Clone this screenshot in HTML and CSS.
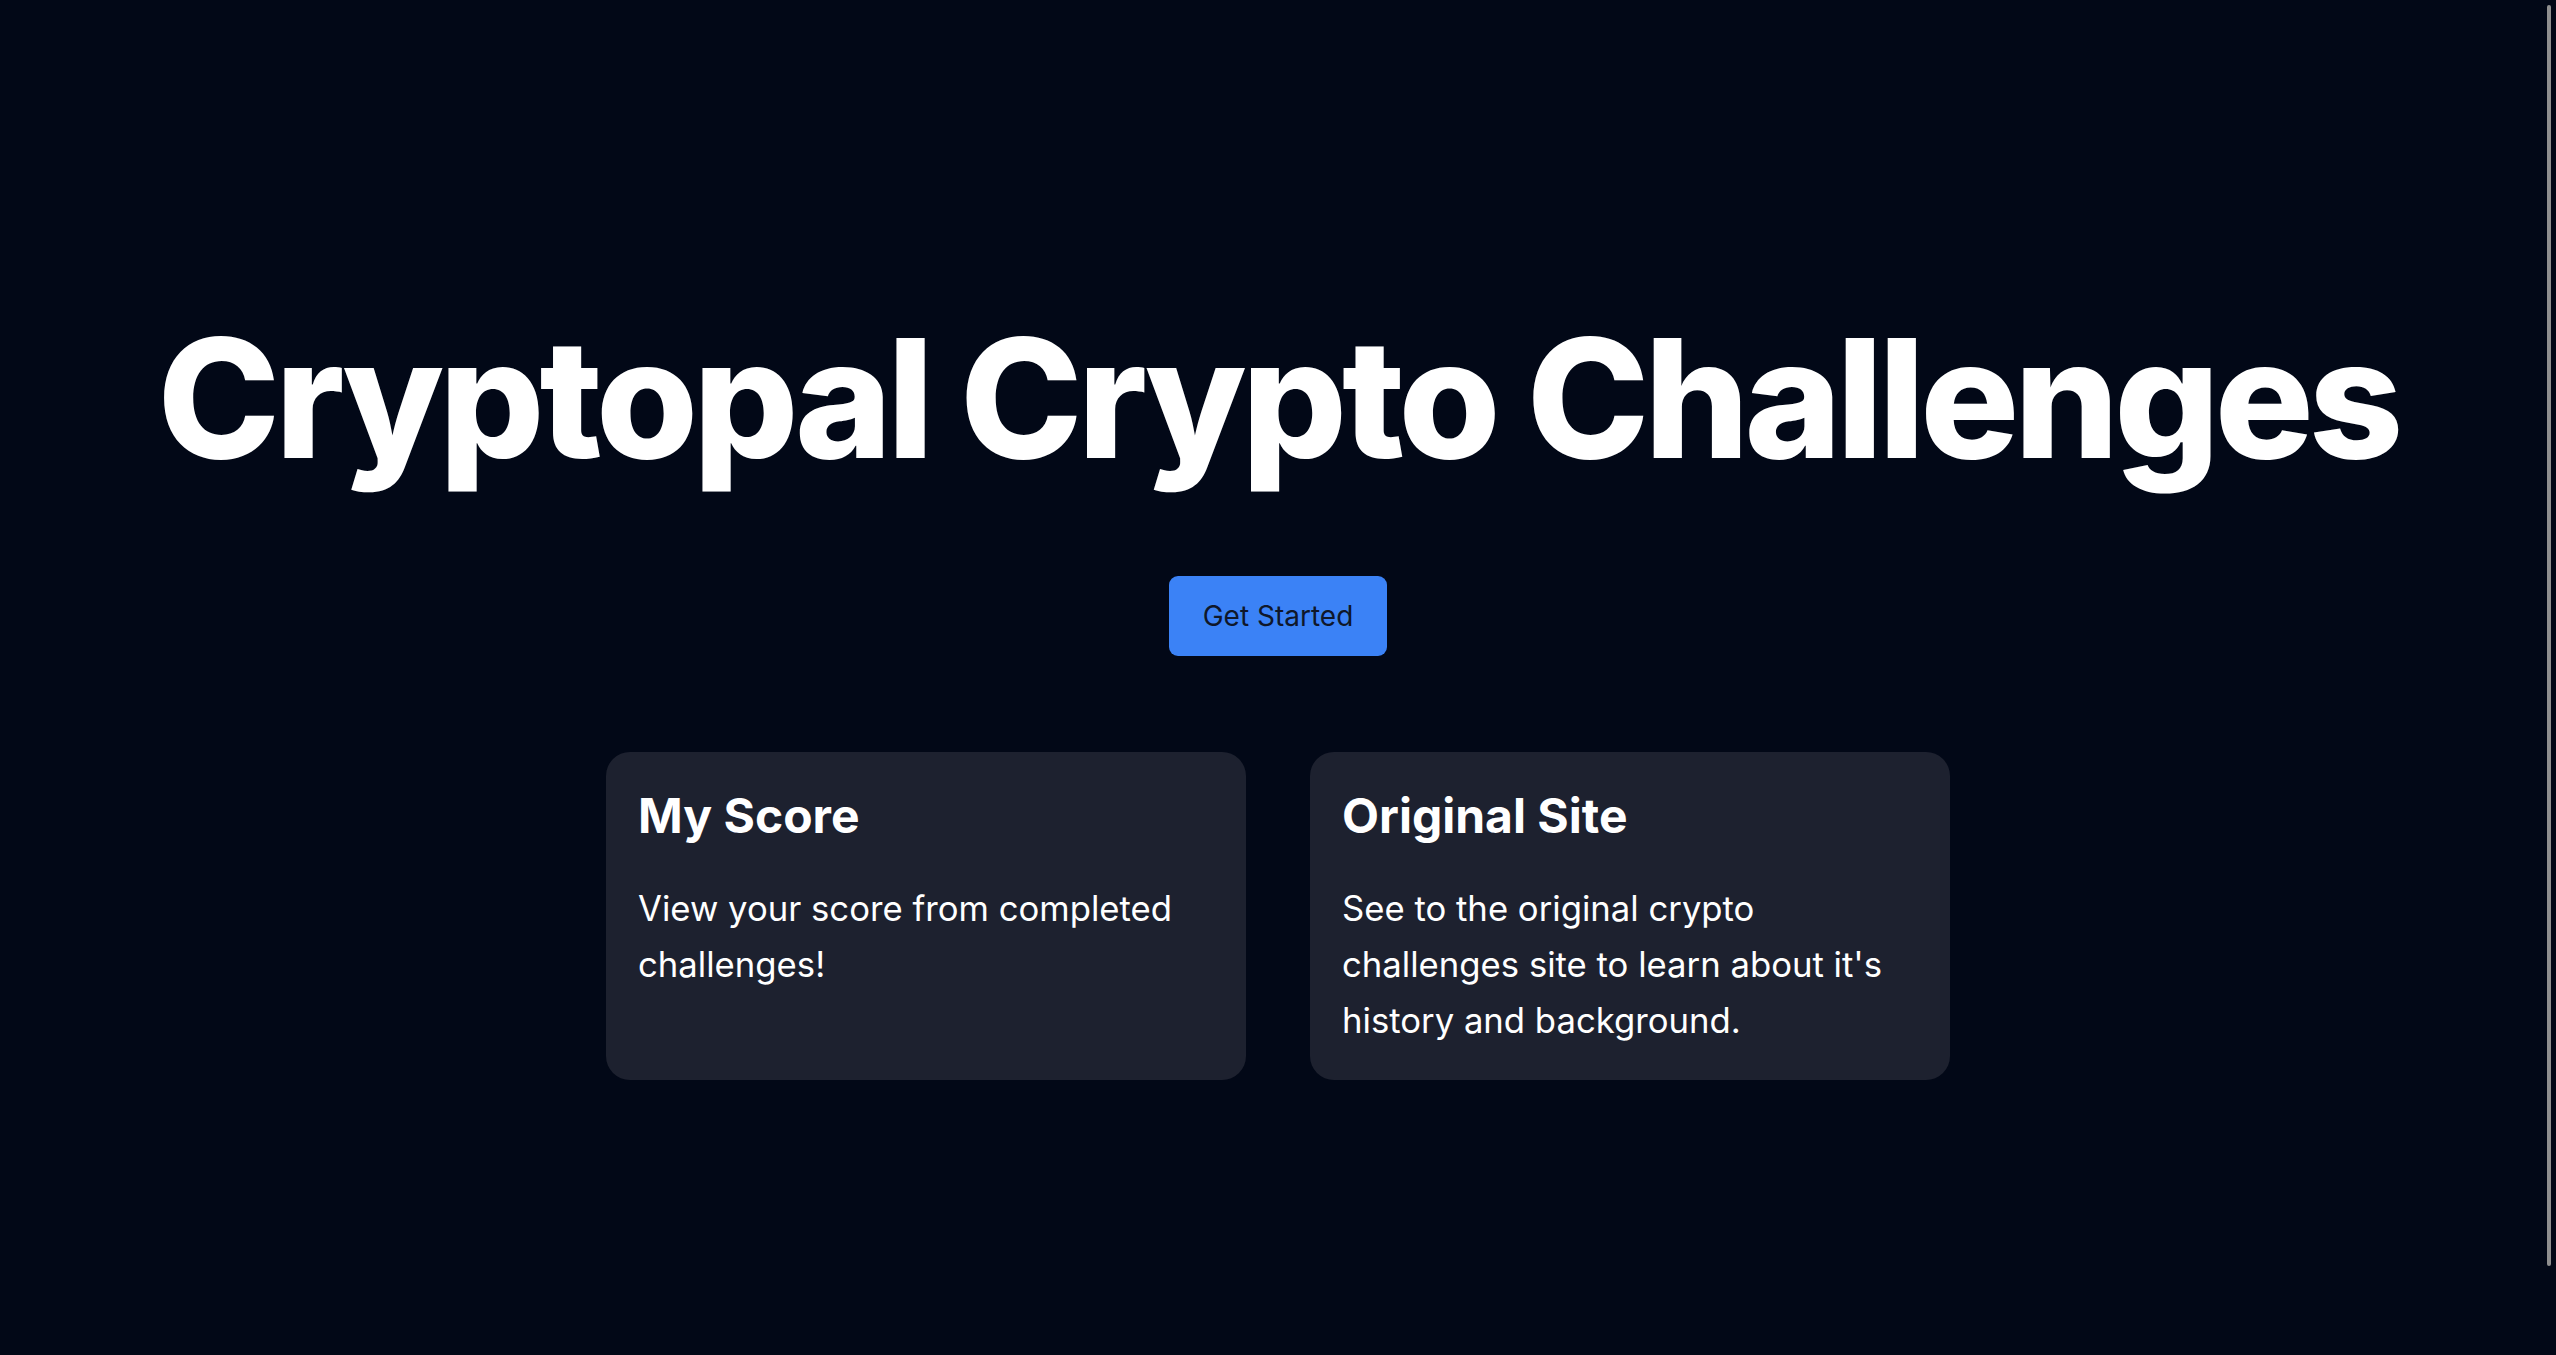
FILE: index.html
```html
<!DOCTYPE html>
<html lang="en">
<head>
<meta charset="utf-8">
<title>Cryptopal Crypto Challenges</title>
<link rel="stylesheet" href="styles.css">
</head>
<body>
<main class="hero">
  <h1 class="hero-title">Cryptopal Crypto Challenges</h1>
  <a class="btn-primary" href="#">Get Started</a>
  <section class="cards">
    <article class="card">
      <h2 class="card-title">My Score</h2>
      <p class="card-text">View your score from completed challenges!</p>
    </article>
    <article class="card">
      <h2 class="card-title">Original Site</h2>
      <p class="card-text">See to the original crypto challenges site to learn about it's history and background.</p>
    </article>
  </section>
</main>
<div class="scroll-thumb"></div>
</body>
</html>
```

FILE: styles.css
```css
html, body {
  margin: 0;
  padding: 0;
  height: 100%;
  overflow: hidden;
}
body {
  background: #020817;
  color: #ffffff;
  font-family: Inter, "Noto Sans", sans-serif;
}
.hero {
  display: flex;
  flex-direction: column;
  align-items: center;
  padding-top: 316px;
  box-sizing: border-box;
}
.hero-title {
  margin: 0;
  font-size: 165px;
  line-height: 165px;
  font-weight: 800;
  letter-spacing: -0.03em;
  white-space: nowrap;
}
.btn-primary {
  margin-top: 95px;
  display: flex;
  align-items: center;
  justify-content: center;
  width: 218px;
  height: 80px;
  box-sizing: border-box;
  background: #3b82f6;
  color: #0f172a;
  border-radius: 9px;
  font-size: 28px;
  font-weight: 400;
  text-decoration: none;
}
.cards {
  margin-top: 96px;
  display: grid;
  grid-template-columns: 640px 640px;
  gap: 64px;
}
.card {
  background: #1d212f;
  border-radius: 24px;
  padding: 35px 32px 32px;
}
.card-title {
  margin: 0 0 35px 0;
  font-size: 48px;
  line-height: 1.2;
  font-weight: 700;
}
.card-text {
  margin: 0;
  font-size: 34.7px;
  line-height: 56px;
  font-weight: 400;
}
.scroll-thumb {
  position: fixed;
  top: 5px;
  right: 5px;
  width: 4px;
  height: 1261px;
  background: #8f8f8f;
  border-radius: 2px;
}
```
